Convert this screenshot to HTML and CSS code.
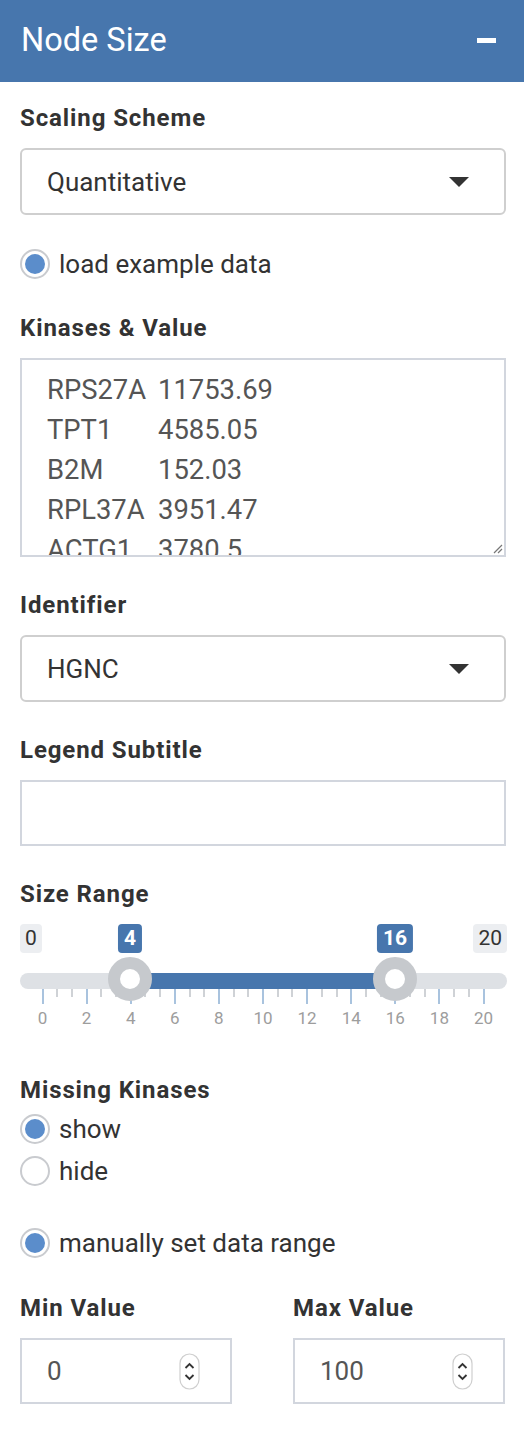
FILE: index.html
```html
<!DOCTYPE html>
<html>
<head>
<meta charset="utf-8">
<link rel="stylesheet" href="styles.css">
</head>
<body>
<div class="panel">
  <div class="panel-heading">
    <h3 class="panel-title">Node Size</h3>
    <span class="collapse-btn"></span>
  </div>
  <div class="panel-body">
    <div class="form-group">
      <div class="control-label">Scaling Scheme</div>
      <div class="select"><span>Quantitative</span><span class="caret"></span></div>
    </div>

    <div class="radio-row"><span class="radio checked"></span><span>load example data</span></div>

    <div class="form-group">
      <div class="control-label">Kinases &amp; Value</div>
      <div class="textarea">
        <div class="kv"><span>RPS27A</span><span>11753.69</span></div>
        <div class="kv"><span>TPT1</span><span>4585.05</span></div>
        <div class="kv"><span>B2M</span><span>152.03</span></div>
        <div class="kv"><span>RPL37A</span><span>3951.47</span></div>
        <div class="kv"><span>ACTG1</span><span>3780.5</span></div>
        <svg class="grip" width="12" height="12" viewBox="0 0 12 12"><path d="M11 3 L3 11 M11 7 L7 11" stroke="#777" stroke-width="1.2" fill="none"/></svg>
      </div>
    </div>

    <div class="form-group">
      <div class="control-label">Identifier</div>
      <div class="select"><span>HGNC</span><span class="caret"></span></div>
    </div>

    <div class="form-group">
      <div class="control-label">Legend Subtitle</div>
      <div class="text-input"></div>
    </div>

    <div class="form-group slider-group">
      <div class="control-label">Size Range</div>
      <div class="slider">
        <span class="bound bound-min">0</span>
        <span class="bound bound-max">20</span>
        <span class="val" style="left:110px">4</span>
        <span class="val" style="left:375px">16</span>
        <div class="track"></div>
        <div class="bar" style="left:110px;width:265px"></div>
        <div class="grid" id="grid"></div>
        <span class="handle" style="left:110px"></span>
        <span class="handle" style="left:375px"></span>
      </div>
    </div>

    <div class="form-group tight">
      <div class="control-label">Missing Kinases</div>
      <div class="radio-list">
        <div class="radio-row"><span class="radio checked"></span><span>show</span></div>
        <div class="radio-row"><span class="radio"></span><span>hide</span></div>
      </div>
    </div>

    <div class="radio-row manual"><span class="radio checked"></span><span>manually set data range</span></div>

    <div class="two-col">
      <div class="col">
        <div class="control-label">Min Value</div>
        <div class="num-input"><span>0</span>
          <svg class="spin" width="21" height="37" viewBox="0 0 21 37"><rect x="1" y="1" width="19" height="35" rx="9.5" fill="#fff" stroke="#cfcfcf" stroke-width="1.2"/><path d="M6.5 15 L10.5 11 L14.5 15 M6.5 22 L10.5 26 L14.5 22" stroke="#333" stroke-width="1.8" fill="none"/></svg>
        </div>
      </div>
      <div class="col">
        <div class="control-label">Max Value</div>
        <div class="num-input"><span>100</span>
          <svg class="spin" width="21" height="37" viewBox="0 0 21 37"><rect x="1" y="1" width="19" height="35" rx="9.5" fill="#fff" stroke="#cfcfcf" stroke-width="1.2"/><path d="M6.5 15 L10.5 11 L14.5 15 M6.5 22 L10.5 26 L14.5 22" stroke="#333" stroke-width="1.8" fill="none"/></svg>
        </div>
      </div>
    </div>
  </div>
</div>
<script>
(function(){
  var g = document.getElementById('grid');
  var x0 = 22.5, step = 22.05;
  var html = '';
  for (var i = 0; i <= 30; i++) {
    var v = i * 2 / 3;
    var x = x0 + v * step;
    if (i % 3 === 0) {
      html += '<span class="tick major" style="left:' + x.toFixed(1) + 'px"></span>';
      html += '<span class="tick-label" style="left:' + x.toFixed(1) + 'px">' + Math.round(v) + '</span>';
    } else {
      html += '<span class="tick minor" style="left:' + x.toFixed(1) + 'px"></span>';
    }
  }
  g.innerHTML = html;
})();
</script>
</body>
</html>
```

FILE: styles.css
```css
* { box-sizing: border-box; }
html, body { margin: 0; padding: 0; background: #fff; }
body {
  font-family: Roboto, "Noto Sans", "Liberation Sans", sans-serif;
  color: #333;
  width: 524px;
}
.panel-heading {
  height: 82px;
  background: #4776ad;
  display: flex;
  align-items: center;
  justify-content: space-between;
  padding: 0 28px 0 21px;
}
.panel-title {
  margin: 0;
  font-size: 32.5px;
  font-weight: 400;
  color: #fff;
  line-height: 1;
  padding-bottom: 2px;
}
.collapse-btn {
  width: 19px;
  height: 5px;
  background: #fff;
  margin-bottom: 1px;
}
.panel-body {
  padding: 22px 18px 0 20px;
}
.control-label {
  font-size: 24px;
  font-weight: 700;
  letter-spacing: 0.9px;
  line-height: 29px;
  margin-bottom: 15px;
}
.form-group { margin-bottom: 34px; }
.select {
  height: 67px;
  border: 2px solid #cfcfcf;
  border-radius: 6px;
  display: flex;
  align-items: center;
  justify-content: space-between;
  padding: 0 35px 0 25px;
  font-size: 26px;
}
.caret {
  width: 0; height: 0;
  border-left: 10px solid transparent;
  border-right: 10px solid transparent;
  border-top: 10px solid #333;
}
.radio-row {
  display: flex;
  align-items: center;
  gap: 9px;
  height: 30px;
  font-size: 26px;
  margin-bottom: 35px;
}
.radio {
  width: 30px; height: 30px;
  border-radius: 50%;
  border: 2px solid #c9cbcf;
  display: flex;
  align-items: center;
  justify-content: center;
  flex: none;
}
.radio.checked::after {
  content: "";
  width: 20px; height: 20px;
  border-radius: 50%;
  background: #5b8dcb;
}
.textarea {
  position: relative;
  height: 199px;
  border: 2px solid #d2d6de;
  padding: 10px 0 0 25px;
  overflow: hidden;
  font-size: 27.4px;
  line-height: 40px;
  color: #555;
}
.kv { display: grid; grid-template-columns: 111px auto; white-space: nowrap; }
.grip { position: absolute; right: 1px; bottom: 1px; }
.text-input {
  height: 66px;
  border: 2px solid #d2d6de;
}
.slider-group { margin-bottom: 40px; }
.slider {
  position: relative;
  height: 112px;
  margin-right: -1px;
}
.bound, .val {
  position: absolute;
  top: 0;
  height: 29px;
  line-height: 29px;
  font-size: 21px;
  padding: 0 5px;
  border-radius: 4px;
}
.bound { background: #eceef1; color: #333; }
.bound-min { left: 0; }
.bound-max { right: 0; }
.val {
  background: #4776ad;
  color: #fff;
  font-weight: 700;
  transform: translateX(-50%);
  padding: 0 6px;
}
.track {
  position: absolute;
  left: 0; right: 0;
  top: 49px;
  height: 16px;
  border-radius: 8px;
  background: #dee1e5;
}
.bar {
  position: absolute;
  top: 49px;
  height: 16px;
  background: #4776ad;
}
.handle {
  position: absolute;
  top: 33px;
  width: 44px; height: 44px;
  margin-left: -22px;
  border-radius: 50%;
  border: 12px solid #c6c9cd;
  background: #fff;
}
.grid { position: absolute; left: 0; right: 0; top: 65px; height: 45px; }
.tick { position: absolute; top: 0; width: 2px; margin-left: -1px; }
.tick.major { height: 15px; background: #a9c3de; }
.tick.minor { height: 8px; background: #cfd2d6; }
.tick-label {
  position: absolute;
  top: 19px;
  font-size: 17px;
  color: #9d9d9d;
  transform: translateX(-50%);
}
.tight { margin-bottom: 0; }
.tight .control-label { margin-bottom: 9px; }
.radio-list .radio-row { margin-bottom: 12px; }
.radio-row.manual { margin-top: 42px; margin-bottom: 36px; }
.two-col { display: grid; grid-template-columns: 212px 212px; column-gap: 61px; }
.num-input {
  height: 66px;
  border: 2px solid #d2d6de;
  display: flex;
  align-items: center;
  justify-content: space-between;
  padding: 0 30px 0 25px;
  font-size: 26px;
  color: #555;
}
.spin { display: block; }
```
